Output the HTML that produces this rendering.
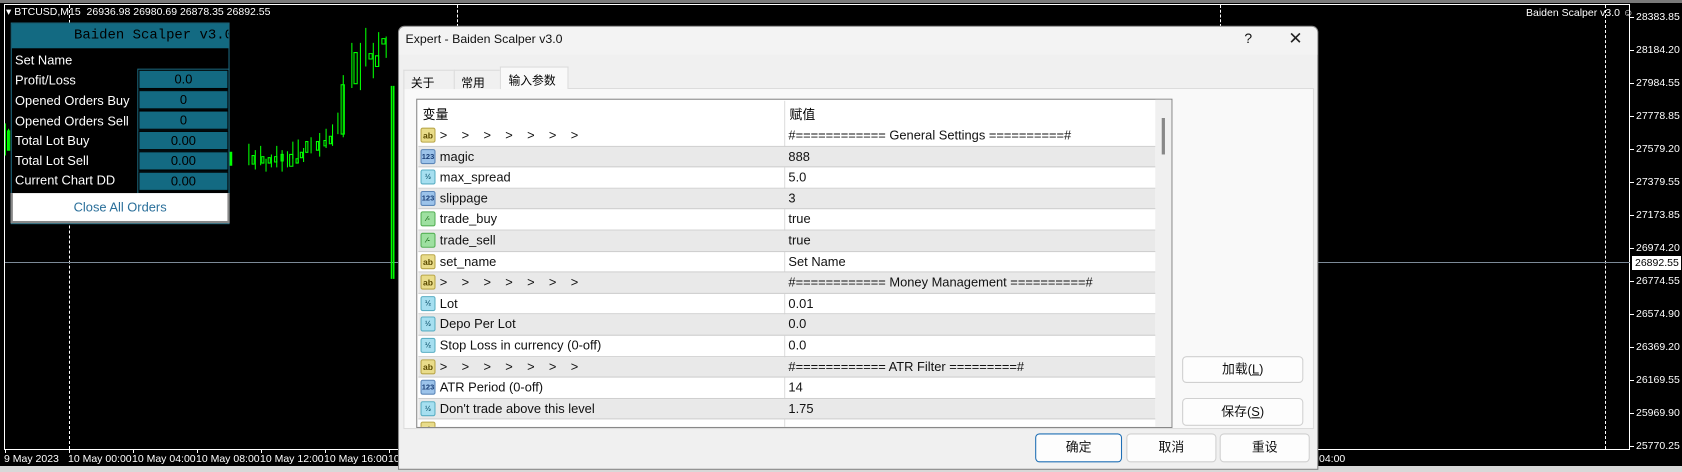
<!DOCTYPE html>
<html><head><meta charset="utf-8"><style>
*{margin:0;padding:0;box-sizing:border-box}
body{width:1682px;height:472px;background:#000;position:relative;overflow:hidden;font-family:"Liberation Sans","Noto Sans CJK SC",sans-serif}
.a{position:absolute}
#s{position:absolute;left:0;top:0;width:1568px;height:440px;transform:scale(1.0727);transform-origin:0 0}
.ax{position:absolute;left:1636px;color:#fff;font-size:10.5px;font-family:"Liberation Sans",sans-serif}
.tk{position:absolute;left:1630px;width:4px;height:1px;background:#fff}
.tx{position:absolute;top:453px;color:#fff;font-size:10.5px;font-family:"Liberation Sans",sans-serif;white-space:nowrap}
.vt{position:absolute;top:449px;width:1px;height:4px;background:#fff}
.lp{position:absolute;left:14px;color:#fff;font-size:12px}
.vb{position:absolute;left:129px;width:84px;height:18px;background:#136a82;border:1px solid #000;color:#000;font-size:12px;text-align:center;line-height:17px}
.row{position:absolute;left:390px;width:687px;height:19.6px;border-bottom:1px solid #cfcfcf;font-size:12px;color:#111}
.row.g{background:#e9e9e9}
.row .n{position:absolute;left:20px;top:2px}
.row .v{position:absolute;left:345px;top:2px}
.ic{position:absolute;left:2px;top:2px;width:14px;height:14px;font-size:7px;line-height:14px;text-align:center;font-weight:bold;border-radius:2px}
.i1{background:#9cc3ea;color:#1b3f77;border:1px solid #5b86b8}
.i2{background:#a6dff0;color:#1b5f77;border:1px solid #5bafc4}
.i3{background:#e9dc8a;color:#5a4a00;border:1px solid #b9a64a;font-size:8px}
.i4{background:#9ee0a0;color:#1a6a1a;border:1px solid #55b055}
.btn{position:absolute;background:#fdfdfd;border:1px solid #d0d0d0;border-radius:4px;font-size:12px;text-align:center;color:#111}
</style></head><body>
<div class="a" style="left:0;top:0;width:1682px;height:3px;background:#7a7a7a"></div>
<div class="a" style="left:4px;top:4px;width:1626px;height:446px;border:1px solid #fff"></div>
<div class="a" style="left:0;top:466px;width:1682px;height:6px;background:#d8d8d8"></div>
<div class="a" style="left:69px;top:5px;height:444px;border-left:1px dashed #fff"></div>
<div class="a" style="left:457px;top:5px;height:22px;border-left:1px dashed #fff"></div>
<div class="a" style="left:1220px;top:5px;height:22px;border-left:1px dashed #fff"></div>
<div class="a" style="left:1605px;top:5px;height:444px;border-left:1px dashed #fff"></div>
<div class="a" style="left:5px;top:262px;width:1625px;height:1px;background:#7c8a98"></div>
<div class="a" style="left:1632px;top:256px;width:49px;height:14px;background:#fff;color:#000;font-size:10.5px;padding:1px 0 0 3px;white-space:nowrap">26892.55</div>
<div class="ax" style="top:11px">28383.85</div><div class="ax" style="top:44px">28184.20</div><div class="ax" style="top:77px">27984.55</div><div class="ax" style="top:110px">27778.85</div><div class="ax" style="top:143px">27579.20</div><div class="ax" style="top:176px">27379.55</div><div class="ax" style="top:209px">27173.85</div><div class="ax" style="top:242px">26974.20</div><div class="ax" style="top:275px">26774.55</div><div class="ax" style="top:308px">26574.90</div><div class="ax" style="top:341px">26369.20</div><div class="ax" style="top:374px">26169.55</div><div class="ax" style="top:407px">25969.90</div><div class="ax" style="top:440px">25770.25</div>
<div class="tk" style="top:17px"></div><div class="tk" style="top:50px"></div><div class="tk" style="top:83px"></div><div class="tk" style="top:116px"></div><div class="tk" style="top:149px"></div><div class="tk" style="top:182px"></div><div class="tk" style="top:215px"></div><div class="tk" style="top:248px"></div><div class="tk" style="top:281px"></div><div class="tk" style="top:314px"></div><div class="tk" style="top:347px"></div><div class="tk" style="top:380px"></div><div class="tk" style="top:413px"></div><div class="tk" style="top:446px"></div>
<div class="vt" style="left:5px"></div><div class="vt" style="left:69px"></div><div class="vt" style="left:133px"></div><div class="vt" style="left:197px"></div><div class="vt" style="left:261px"></div><div class="vt" style="left:325px"></div><div class="vt" style="left:389px"></div>
<div class="tx" style="left:4px">9 May 2023</div><div class="tx" style="left:68px">10 May 00:00</div><div class="tx" style="left:132px">10 May 04:00</div><div class="tx" style="left:196px">10 May 08:00</div><div class="tx" style="left:260px">10 May 12:00</div><div class="tx" style="left:324px">10 May 16:00</div><div class="tx" style="left:388px">10</div><div class="tx" style="left:1319px">04:00</div>
<div class="a" style="left:6px;top:6px;color:#fff;font-size:10.5px;white-space:nowrap">▾ BTCUSD,M15&nbsp; 26936.98 26980.69 26878.35 26892.55</div>
<div class="a" style="left:1526px;top:7px;color:#fff;font-size:10.5px;white-space:nowrap">Baiden Scalper v3.0 ☺</div>
<div id="s">
<svg class="a" style="left:0;top:0" width="380" height="300" stroke="#00ff00" fill="none" stroke-width="1">
<path d="M5 115v30M8 120v20M232 134v20M238 140v18M243 136v18M248 148v12M253 144v12M258 136v20M263 140v20M268 141v15M273 132v16M278 130v22M283 138v13M290 128v15M298 124v22M304 120v18M310 116v20M315 105v20M320 70v58M328 40v42M336 40v44M341 26v36M348 40v33M353 30v32M360 34v20"/>
<path d="M7 122h2v18h-2zM235 145h2v8h-2zM244 146h2v6h-2zM250 147h2v5h-2zM256 146h2v5h-2zM262 144h2v6h-2zM270 144h3v11h-3zM276 148h2v4h-2zM280 142h2v5h-2zM285 132h2v10h-2zM295 132h2v8h-2zM302 131h2v5h-2zM307 127h2v7h-2zM318 79h3v46h-3zM330 49h3v29h-3zM344 50h3v5h-3zM350 52h3v10h-3zM356 36h3v5h-3z"/>
<path d="M71 144h3v9h-3zM212 142h4v12h-4z" fill="#00ff00"/>
<path d="M365 80v180M367 80v180" stroke-width="1.5"/>
</svg>
<div class="a" style="left:10px;top:21px;width:204px;height:188px;background:#000;border:1px solid #1d6a80"></div>
<div class="a" style="left:11px;top:22px;width:202px;height:23px;background:#136a82;color:#000;font-family:'Liberation Mono',monospace;font-size:13px;line-height:22px;padding-left:58px;white-space:nowrap;overflow:hidden">Baiden Scalper v3.0</div>
<div class="lp" style="top:49px">Set Name</div>
<div class="lp" style="top:68px">Profit/Loss</div>
<div class="lp" style="top:87px">Opened Orders Buy</div>
<div class="lp" style="top:106px">Opened Orders Sell</div>
<div class="lp" style="top:124px">Total Lot Buy</div>
<div class="lp" style="top:143px">Total Lot Sell</div>
<div class="lp" style="top:161px">Current Chart DD</div>
<div class="a" style="left:128px;top:64px;width:86px;height:117px;border:1px solid #1d6a80"></div>
<div class="vb" style="top:65px">0.0</div><div class="vb" style="top:84px">0</div><div class="vb" style="top:103px">0</div><div class="vb" style="top:122px">0.00</div><div class="vb" style="top:141px">0.00</div><div class="vb" style="top:160px">0.00</div>
<div class="a" style="left:10px;top:180px;width:204px;height:28px;background:#fff;border:2px solid #888;border-top:none;color:#2a6f9a;font-size:12px;text-align:center;line-height:27px">Close All Orders</div>
<div class="a" style="left:371px;top:24px;width:858px;height:414px;background:#f0f0f0;border:1px solid #8a8a8a;border-radius:6px 6px 0 0"></div>
<div class="a" style="left:372px;top:25px;width:856px;height:26px;background:#f3f3f3;border-radius:6px 6px 0 0"></div>
<div class="a" style="left:378px;top:31px;font-size:11.5px;color:#111">Expert - Baiden Scalper v3.0</div>
<div class="a" style="left:1160px;top:28px;font-size:13px;color:#111">?</div>
<div class="a" style="left:1201px;top:26px;font-size:16px;color:#222">✕</div>
<div class="a" style="left:376px;top:82px;width:849px;height:318px;background:#f9f9f9;border:1px solid #dcdcdc"></div>
<div class="a" style="left:376px;top:65px;width:48px;height:18px;background:#f0f0f0;border:1px solid #dcdcdc;border-bottom:none;font-size:11px;padding:3px 0 0 6px">关于</div>
<div class="a" style="left:423px;top:65px;width:44px;height:18px;background:#f0f0f0;border:1px solid #dcdcdc;border-bottom:none;font-size:11px;padding:3px 0 0 6px">常用</div>
<div class="a" style="left:466px;top:62px;width:64px;height:21px;background:#f9f9f9;border:1px solid #dcdcdc;border-bottom:none;font-size:11px;padding:4px 0 0 7px">输入参数</div>
<div class="a" style="left:388px;top:92px;width:705px;height:307px;background:#fff;border:1px solid #888"></div>
<div class="a" style="left:1077px;top:93px;width:15px;height:305px;background:#f0f0f0"></div>
<div class="a" style="left:1083px;top:110px;width:3px;height:34px;background:#888"></div>
<div class="a" style="left:394px;top:98px;font-size:12px">变量</div>
<div class="a" style="left:736px;top:98px;font-size:12px">赋值</div>
<div class="a" style="left:731px;top:94px;width:1px;height:304px;background:#ddd"></div>
<div class="row" style="top:117px"><span class="ic i3">ab</span><span class="n">&gt;&nbsp;&nbsp;&nbsp; &gt;&nbsp;&nbsp;&nbsp; &gt;&nbsp;&nbsp;&nbsp; &gt;&nbsp;&nbsp;&nbsp; &gt;&nbsp;&nbsp;&nbsp; &gt;&nbsp;&nbsp;&nbsp; &gt;</span><span class="v">#============ General Settings ==========#</span></div>
<div class="row g" style="top:136.6px"><span class="ic i1">123</span><span class="n">magic</span><span class="v">888</span></div>
<div class="row" style="top:156.2px"><span class="ic i2">½</span><span class="n">max_spread</span><span class="v">5.0</span></div>
<div class="row g" style="top:175.8px"><span class="ic i1">123</span><span class="n">slippage</span><span class="v">3</span></div>
<div class="row" style="top:195.4px"><span class="ic i4">⁄-</span><span class="n">trade_buy</span><span class="v">true</span></div>
<div class="row g" style="top:215px"><span class="ic i4">⁄-</span><span class="n">trade_sell</span><span class="v">true</span></div>
<div class="row" style="top:234.6px"><span class="ic i3">ab</span><span class="n">set_name</span><span class="v">Set Name</span></div>
<div class="row g" style="top:254.2px"><span class="ic i3">ab</span><span class="n">&gt;&nbsp;&nbsp;&nbsp; &gt;&nbsp;&nbsp;&nbsp; &gt;&nbsp;&nbsp;&nbsp; &gt;&nbsp;&nbsp;&nbsp; &gt;&nbsp;&nbsp;&nbsp; &gt;&nbsp;&nbsp;&nbsp; &gt;</span><span class="v">#============ Money Management ==========#</span></div>
<div class="row" style="top:273.8px"><span class="ic i2">½</span><span class="n">Lot</span><span class="v">0.01</span></div>
<div class="row g" style="top:293.4px"><span class="ic i2">½</span><span class="n">Depo Per Lot</span><span class="v">0.0</span></div>
<div class="row" style="top:313px"><span class="ic i2">½</span><span class="n">Stop Loss in currency (0-off)</span><span class="v">0.0</span></div>
<div class="row g" style="top:332.6px"><span class="ic i3">ab</span><span class="n">&gt;&nbsp;&nbsp;&nbsp; &gt;&nbsp;&nbsp;&nbsp; &gt;&nbsp;&nbsp;&nbsp; &gt;&nbsp;&nbsp;&nbsp; &gt;&nbsp;&nbsp;&nbsp; &gt;&nbsp;&nbsp;&nbsp; &gt;</span><span class="v">#============ ATR Filter =========#</span></div>
<div class="row" style="top:352.2px"><span class="ic i1">123</span><span class="n">ATR Period (0-off)</span><span class="v">14</span></div>
<div class="row g" style="top:371.8px"><span class="ic i2">½</span><span class="n">Don't trade above this level</span><span class="v">1.75</span></div>
<div class="row" style="top:391.4px;height:7px;overflow:hidden;border:none"><span class="ic i3">ab</span></div>
<div class="btn" style="left:1102px;top:332px;width:113px;height:25px;line-height:23px">加载(<u>L</u>)</div>
<div class="btn" style="left:1102px;top:371px;width:113px;height:26px;line-height:24px">保存(<u>S</u>)</div>
<div class="btn" style="left:965px;top:404px;width:81px;height:27px;line-height:25px;border:1px solid #1f6fb5">确定</div>
<div class="btn" style="left:1050px;top:404px;width:84px;height:27px;line-height:25px">取消</div>
<div class="btn" style="left:1137px;top:404px;width:84px;height:27px;line-height:25px">重设</div>
</div>
</body></html>
